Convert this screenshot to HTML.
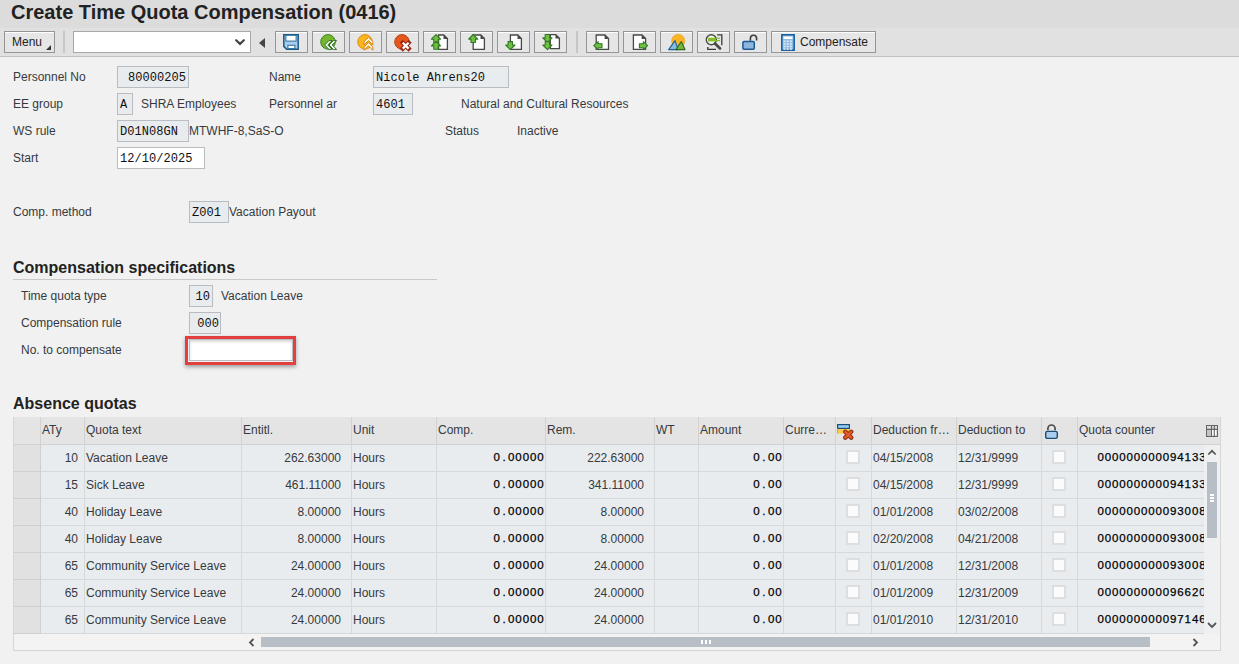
<!DOCTYPE html><html><head><meta charset="utf-8"><style>
*{box-sizing:border-box;margin:0;padding:0}
html,body{width:1239px;height:664px;overflow:hidden;background:#f1f1f1;font-family:"Liberation Sans",sans-serif;font-size:12px;color:#363a3e}
.a{position:absolute;white-space:nowrap}
#title{position:absolute;left:0;top:0;width:1239px;height:28px;background:#dcdcdc}
#title h1{position:absolute;left:11px;top:-0.5px;font-size:20px;font-weight:bold;color:#222;line-height:24px;white-space:nowrap}
#tb{position:absolute;left:0;top:28px;width:1239px;height:29px;background:#e1e1e1;border-bottom:1px solid #c2c2c2}
.btn{position:absolute;top:3px;height:22px;width:33px;border:1px solid #959595;background:#e6e6e6;box-shadow:inset 0 1px 0 #fff}
.btn svg{position:absolute;left:7px;top:2px}
.sep{position:absolute;top:3px;width:2px;height:22px;background:#c6c6c6}
.lbl{position:absolute;white-space:nowrap;line-height:14px}
.fld{position:absolute;height:22px;border:1px solid #b9bdc1;background:#e9ecef;font-family:"Liberation Mono",monospace;font-size:12px;color:#111;line-height:22px;padding:0 2px;white-space:nowrap;letter-spacing:0.06px}
.fld.w{background:#fff}
h2{position:absolute;font-size:16px;font-weight:bold;color:#222;white-space:nowrap;line-height:20px}
#tbl{position:absolute;left:13px;top:417px;width:1208px;height:234px;border:1px solid #d6d6d6;border-top:none;background:#f3f3f3;overflow:hidden}
.hd{position:absolute;top:0;height:28px;background:#e4e4e4;border-right:1px solid #d2d2d2;border-bottom:1px solid #d2d2d2;color:#363a3e;line-height:26px;padding-left:1px;white-space:nowrap;overflow:hidden}
.c{position:absolute;height:27px;background:#e9ecef;border-right:1px solid #d6d9dc;border-bottom:1px solid #d6d9dc;line-height:26px;white-space:nowrap;overflow:hidden;color:#363a3e}
.sel{background:#e1e1e1;border-right:1px solid #cfcfcf;border-bottom:1px solid #cfcfcf}
.r{text-align:right;padding-right:4px}
.m{color:#000;font-size:11.5px;line-height:24px;-webkit-text-stroke:0.25px #000}
.m span{display:inline-block;width:7.28px;text-align:center}
.cb{position:absolute;width:14px;height:14px;background:#fbfbfb;border:2px solid #dcdee0;top:5px}
</style></head><body>
<div id="title"><h1>Create Time Quota Compensation (0416)</h1></div>
<div id="tb">
<div class="btn" style="left:4px;width:51px"><span class="a" style="left:7px;top:3px;color:#222;font-size:12px">Menu</span><svg class="a" style="left:41px;top:13px" width="5" height="5"><path d="M5 0V5H0Z" fill="#333"/></svg></div>
<div class="sep" style="left:63px"></div>
<div class="a" style="left:73px;top:3px;width:178px;height:22px;background:#fff;border:1px solid #a8a8a8"><svg class="a" style="left:161px;top:7px" width="10" height="7"><path d="M1.2 1.2L5 5L8.8 1.2" fill="none" stroke="#444" stroke-width="2.2" stroke-linecap="round"/></svg></div>
<svg class="a" style="left:259px;top:10px" width="6" height="10"><path d="M6 0V10L0 5Z" fill="#444"/></svg>
<div class="btn" style="left:275px"><svg width="16" height="16" viewBox="0 0 16 16" overflow="visible"><path d="M0.8 0.8H15.2V15.2H3.6L0.8 12.4Z" fill="#a6cdee" stroke="#1d5a86" stroke-width="1.5"/><rect x="2.9" y="1.3" width="10.2" height="5.8" fill="#fff" stroke="#2a6d9c" stroke-width="1"/><rect x="4.9" y="11.3" width="7" height="3.3" fill="#fff" stroke="#2a6d9c" stroke-width="1"/></svg></div>
<div class="btn" style="left:312px"><svg width="16" height="16" viewBox="0 0 16 16" overflow="visible"><circle cx="8" cy="7.9" r="7.3" fill="#74b72e" stroke="#3f7f25" stroke-width="1"/><path d="M4.6 11L9 6.6H12.2L7.8 11L12.2 15.4H9Z" fill="#f4fff0" stroke="#2d6a1f" stroke-width="1" stroke-linejoin="miter"/><path d="M9 11L13.4 6.6H16.6L12.2 11L16.6 15.4H13.4Z" fill="#f4fff0" stroke="#2d6a1f" stroke-width="1" stroke-linejoin="miter"/></svg></div>
<div class="btn" style="left:349px"><svg width="16" height="16" viewBox="0 0 16 16" overflow="visible"><circle cx="8" cy="7.9" r="7.3" fill="#f8b61d" stroke="#e49019" stroke-width="1"/><path d="M11.5 3.3L15.9 7.7V10.9L11.5 6.5L7.1 10.9V7.7Z" fill="#fff8e6" stroke="#d9841a" stroke-width="1" stroke-linejoin="miter"/><path d="M11.5 8.6L15.9 13V16.2L11.5 11.8L7.1 16.2V13Z" fill="#fff8e6" stroke="#d9841a" stroke-width="1" stroke-linejoin="miter"/></svg></div>
<div class="btn" style="left:386px"><svg width="16" height="16" viewBox="0 0 16 16" overflow="visible"><circle cx="8" cy="7.9" r="7.3" fill="#e4591b" stroke="#b8401a" stroke-width="1"/><path d="M8.8 8.8L14.6 14.6M14.6 8.8L8.8 14.6" stroke="#9e2a14" stroke-width="4.4" stroke-linecap="square"/><path d="M8.8 8.8L14.6 14.6M14.6 8.8L8.8 14.6" stroke="#fff" stroke-width="2.2"/></svg></div>
<div class="btn" style="left:423px"><svg width="16" height="16" viewBox="0 0 16 16" overflow="visible"><path d="M7.6 1H12.8L16.4 4.6V15.4H7.6Z" fill="#fff" stroke="#484848" stroke-width="1.3" stroke-linejoin="miter"/><path d="M12.5 0.7L16.7 4.9H12.5Z" fill="#484848"/><path d="M5 0.6L9.6 5.2H7.2V8.6H2.8V5.2H0.4Z" fill="#72bf45" stroke="#2f7a22" stroke-width="1.1" stroke-linejoin="round"/><path d="M5 7.3L9.6 11.9H7.2V15.3H2.8V11.9H0.4Z" fill="#72bf45" stroke="#2f7a22" stroke-width="1.1" stroke-linejoin="round"/></svg></div>
<div class="btn" style="left:460px"><svg width="16" height="16" viewBox="0 0 16 16" overflow="visible"><path d="M5.2 1H12.8L16.4 4.6V15.4H5.2Z" fill="#fff" stroke="#484848" stroke-width="1.3" stroke-linejoin="miter"/><path d="M12.5 0.7L16.7 4.9H12.5Z" fill="#484848"/><path d="M5.2 0.5L9.8 5.1H7.4V8.5H3V5.1H0.6Z" fill="#72bf45" stroke="#2f7a22" stroke-width="1.1" stroke-linejoin="round"/></svg></div>
<div class="btn" style="left:497px"><svg width="16" height="16" viewBox="0 0 16 16" overflow="visible"><path d="M5.4 1H12.8L16.4 4.6V15.4H5.4Z" fill="#fff" stroke="#484848" stroke-width="1.3" stroke-linejoin="miter"/><path d="M12.5 0.7L16.7 4.9H12.5Z" fill="#484848"/><path d="M5.3 15.6L9.9 11H7.5V7.6H3.1V11H0.7Z" fill="#72bf45" stroke="#2f7a22" stroke-width="1.1" stroke-linejoin="round"/></svg></div>
<div class="btn" style="left:534px"><svg width="16" height="16" viewBox="0 0 16 16" overflow="visible"><path d="M8.3 0.7H13.8L17.4 4.3V14.6H8.3Z" fill="#fff" stroke="#484848" stroke-width="1.3" stroke-linejoin="miter"/><path d="M13.5 0.4L17.7 4.6H13.5Z" fill="#484848"/><path d="M5.4 8.5L10 3.9H7.6V0.5H3.2V3.9H0.8Z" fill="#72bf45" stroke="#2f7a22" stroke-width="1.1" stroke-linejoin="round"/><path d="M5.4 15.6L10 11H7.6V7.6H3.2V11H0.8Z" fill="#72bf45" stroke="#2f7a22" stroke-width="1.1" stroke-linejoin="round"/></svg></div>
<div class="btn" style="left:586px"><svg width="16" height="16" viewBox="0 0 16 16" overflow="visible"><path d="M2.2 1H10.9L14.5 4.6V15.4H2.2Z" fill="#fff" stroke="#484848" stroke-width="1.3" stroke-linejoin="miter"/><path d="M10.6 0.7L14.8 4.9H10.6Z" fill="#484848"/><path d="M-0.2 11.7L4.1 7.7V9.7H8V13.7H4.1V15.7Z" fill="#72bf45" stroke="#2f7a22" stroke-width="1.1" stroke-linejoin="round"/></svg></div>
<div class="btn" style="left:623px"><svg width="16" height="16" viewBox="0 0 16 16" overflow="visible"><path d="M2.4 1H11L14.6 4.6V15.4H2.4Z" fill="#fff" stroke="#484848" stroke-width="1.3" stroke-linejoin="miter"/><path d="M10.7 0.7L14.9 4.9H10.7Z" fill="#484848"/><path d="M16.6 11.7L12.3 7.7V9.7H8.4V13.7H12.3V15.7Z" fill="#72bf45" stroke="#2f7a22" stroke-width="1.1" stroke-linejoin="round"/></svg></div>
<div class="btn" style="left:660px"><svg width="16" height="16" viewBox="0 0 16 16" overflow="visible"><circle cx="10.2" cy="6.9" r="6.6" fill="#f8b424" stroke="#ec9f22" stroke-width="0.6"/><path d="M0.6 15.6L7 6.6L10.2 15.6Z" fill="#86bde6" stroke="#1e5f8d" stroke-width="1.1" stroke-linejoin="round"/><path d="M7.9 15.6L13.3 7.5L17 15.6Z" fill="#72b83c" stroke="#2c6a1e" stroke-width="1.1" stroke-linejoin="round"/></svg></div>
<div class="btn" style="left:697px"><svg width="16" height="16" viewBox="0 0 16 16" overflow="visible"><path d="M12.2 0.9H16.8V11.2M2.8 13V15.4H11" fill="none" stroke="#3a3a3a" stroke-width="1.3"/><circle cx="6.3" cy="5.8" r="5" fill="#eef8e0" stroke="#4a4a4a" stroke-width="1.4"/><rect x="3" y="3.8" width="7" height="3.6" fill="#86bd2c"/><rect x="10.5" y="3.6" width="4.5" height="1.2" fill="#86bd2c"/><rect x="10.5" y="6" width="4.5" height="1.2" fill="#86bd2c"/><path d="M10 9.6L15 14.6" stroke="#4a4a4a" stroke-width="2.8" stroke-linecap="round"/></svg></div>
<div class="btn" style="left:734px"><svg width="16" height="16" viewBox="0 0 16 16" overflow="visible"><path d="M8.4 6.8V4.4A3.1 3.1 0 0 1 14.6 4.4V6.6" fill="none" stroke="#3f3f3f" stroke-width="1.6"/><rect x="0.9" y="7.6" width="11.4" height="7.6" rx="1.2" fill="#8db7df" stroke="#1c5a93" stroke-width="1.5"/></svg></div>
<div class="sep" style="left:576px"></div>
<div class="btn" style="left:771px;width:105px"><svg class="a" style="left:9px;top:2px" width="14" height="17" viewBox="0 0 14 17"><rect x="0.8" y="0.8" width="12.4" height="15.4" fill="#8fbbe3" stroke="#1d63a0" stroke-width="1.6"/><rect x="2.5" y="2.5" width="9" height="2.5" fill="#fff"/><rect x="2.5" y="6.5" width="2" height="1.6" fill="#dbeaf7"/><rect x="2.5" y="9.1" width="2" height="1.6" fill="#dbeaf7"/><rect x="2.5" y="11.7" width="2" height="1.6" fill="#dbeaf7"/><rect x="2.5" y="14.3" width="2" height="1.6" fill="#dbeaf7"/><rect x="5.7" y="6.5" width="2" height="1.6" fill="#dbeaf7"/><rect x="5.7" y="9.1" width="2" height="1.6" fill="#dbeaf7"/><rect x="5.7" y="11.7" width="2" height="1.6" fill="#dbeaf7"/><rect x="5.7" y="14.3" width="2" height="1.6" fill="#dbeaf7"/><rect x="8.9" y="6.5" width="2" height="1.6" fill="#dbeaf7"/><rect x="8.9" y="9.1" width="2" height="1.6" fill="#dbeaf7"/><rect x="8.9" y="11.7" width="2" height="1.6" fill="#dbeaf7"/><rect x="8.9" y="14.3" width="2" height="1.6" fill="#dbeaf7"/></svg><span class="a" style="left:28px;top:3px;color:#222">Compensate</span></div>
</div>

<div class="lbl" style="left:13px;top:70px">Personnel No</div>
<div class="fld" style="left:117px;top:66px;width:72px;text-align:right;padding-right:2px">80000205</div>
<div class="lbl" style="left:269px;top:70px">Name</div>
<div class="fld" style="left:373px;top:66px;width:136px">Nicole Ahrens20</div>
<div class="lbl" style="left:13px;top:97px">EE group</div>
<div class="fld" style="left:117px;top:93px;width:16px;padding:0 2px">A</div>
<div class="lbl" style="left:141px;top:97px">SHRA Employees</div>
<div class="lbl" style="left:269px;top:97px">Personnel ar</div>
<div class="fld" style="left:373px;top:93px;width:40px">4601</div>
<div class="lbl" style="left:461px;top:97px">Natural and Cultural Resources</div>
<div class="lbl" style="left:13px;top:124px">WS rule</div>
<div class="fld" style="left:117px;top:120px;width:72px">D01N08GN</div>
<div class="lbl" style="left:189px;top:124px">MTWHF-8,SaS-O</div>
<div class="lbl" style="left:445px;top:124px">Status</div>
<div class="lbl" style="left:517px;top:124px">Inactive</div>
<div class="lbl" style="left:13px;top:151px">Start</div>
<div class="fld w" style="left:117px;top:147px;width:88px">12/10/2025</div>
<div class="lbl" style="left:13px;top:205px">Comp. method</div>
<div class="fld" style="left:189px;top:201px;width:40px">Z001</div>
<div class="lbl" style="left:229px;top:205px">Vacation Payout</div>
<h2 style="left:13px;top:258px">Compensation specifications</h2>
<div class="a" style="left:13px;top:279px;width:424px;height:1px;background:#c9c9c9"></div>
<div class="lbl" style="left:21px;top:289px">Time quota type</div>
<div class="fld" style="left:189px;top:285px;width:24px;text-align:right;padding-right:2px">10</div>
<div class="lbl" style="left:221px;top:289px">Vacation Leave</div>
<div class="lbl" style="left:21px;top:316px">Compensation rule</div>
<div class="fld" style="left:189px;top:312px;width:32px;text-align:right;padding-right:1px">000</div>
<div class="lbl" style="left:21px;top:343px">No. to compensate</div>
<div class="a" style="left:185px;top:336px;width:111px;height:29px;border:3px solid #e2403f;box-shadow:0 2px 4px rgba(0,0,0,.35)"></div>
<div class="fld w" style="left:189px;top:339px;width:104px;box-shadow:inset 0 2px 3px rgba(0,0,0,.15)"></div>
<h2 style="left:13px;top:394px">Absence quotas</h2>

<div id="tbl">
<div class="a" style="left:0;top:0;width:1190px;height:217px;overflow:hidden">
<div class="hd" style="left:0px;width:27px"></div>
<div class="hd" style="left:27px;width:44px">ATy</div>
<div class="hd" style="left:71px;width:157px">Quota text</div>
<div class="hd" style="left:228px;width:110px">Entitl.</div>
<div class="hd" style="left:338px;width:85px">Unit</div>
<div class="hd" style="left:423px;width:109px">Comp.</div>
<div class="hd" style="left:532px;width:109px">Rem.</div>
<div class="hd" style="left:641px;width:44px">WT</div>
<div class="hd" style="left:685px;width:85px">Amount</div>
<div class="hd" style="left:770px;width:52px">Curre&hellip;</div>
<div class="hd" style="left:822px;width:36px"></div>
<div class="hd" style="left:858px;width:85px">Deduction fr&hellip;</div>
<div class="hd" style="left:943px;width:85px">Deduction to</div>
<div class="hd" style="left:1028px;width:36px"></div>
<div class="hd" style="left:1064px;width:223px">Quota counter</div>
<div class="c sel" style="left:0px;top:28px;width:27px"></div>
<div class="c " style="left:27px;top:28px;width:44px;text-align:right;padding-right:6px">10</div>
<div class="c " style="left:71px;top:28px;width:157px;padding-left:1px">Vacation Leave</div>
<div class="c " style="left:228px;top:28px;width:110px;text-align:right;padding-right:10px">262.63000</div>
<div class="c " style="left:338px;top:28px;width:85px;padding-left:1px">Hours</div>
<div class="c m" style="left:423px;top:28px;width:109px;text-align:right;padding-right:1px"><span>0</span><span>.</span><span>0</span><span>0</span><span>0</span><span>0</span><span>0</span></div>
<div class="c " style="left:532px;top:28px;width:109px;text-align:right;padding-right:10px">222.63000</div>
<div class="c " style="left:641px;top:28px;width:44px;padding-left:1px"></div>
<div class="c m" style="left:685px;top:28px;width:85px;text-align:right;padding-right:1px"><span>0</span><span>.</span><span>0</span><span>0</span></div>
<div class="c " style="left:770px;top:28px;width:52px;padding-left:1px"></div>
<div class="c " style="left:822px;top:28px;width:36px;padding-left:0px"><div class="cb" style="left:10px"></div></div>
<div class="c " style="left:858px;top:28px;width:85px;padding-left:1px">04/15/2008</div>
<div class="c " style="left:943px;top:28px;width:85px;padding-left:1px">12/31/9999</div>
<div class="c " style="left:1028px;top:28px;width:36px;padding-left:0px"><div class="cb" style="left:10px"></div></div>
<div class="c m" style="left:1064px;top:28px;width:223px;padding-left:19px"><span>0</span><span>0</span><span>0</span><span>0</span><span>0</span><span>0</span><span>0</span><span>0</span><span>0</span><span>0</span><span>9</span><span>4</span><span>1</span><span>3</span><span>3</span></div>
<div class="c sel" style="left:0px;top:55px;width:27px"></div>
<div class="c " style="left:27px;top:55px;width:44px;text-align:right;padding-right:6px">15</div>
<div class="c " style="left:71px;top:55px;width:157px;padding-left:1px">Sick Leave</div>
<div class="c " style="left:228px;top:55px;width:110px;text-align:right;padding-right:10px">461.11000</div>
<div class="c " style="left:338px;top:55px;width:85px;padding-left:1px">Hours</div>
<div class="c m" style="left:423px;top:55px;width:109px;text-align:right;padding-right:1px"><span>0</span><span>.</span><span>0</span><span>0</span><span>0</span><span>0</span><span>0</span></div>
<div class="c " style="left:532px;top:55px;width:109px;text-align:right;padding-right:10px">341.11000</div>
<div class="c " style="left:641px;top:55px;width:44px;padding-left:1px"></div>
<div class="c m" style="left:685px;top:55px;width:85px;text-align:right;padding-right:1px"><span>0</span><span>.</span><span>0</span><span>0</span></div>
<div class="c " style="left:770px;top:55px;width:52px;padding-left:1px"></div>
<div class="c " style="left:822px;top:55px;width:36px;padding-left:0px"><div class="cb" style="left:10px"></div></div>
<div class="c " style="left:858px;top:55px;width:85px;padding-left:1px">04/15/2008</div>
<div class="c " style="left:943px;top:55px;width:85px;padding-left:1px">12/31/9999</div>
<div class="c " style="left:1028px;top:55px;width:36px;padding-left:0px"><div class="cb" style="left:10px"></div></div>
<div class="c m" style="left:1064px;top:55px;width:223px;padding-left:19px"><span>0</span><span>0</span><span>0</span><span>0</span><span>0</span><span>0</span><span>0</span><span>0</span><span>0</span><span>0</span><span>9</span><span>4</span><span>1</span><span>3</span><span>3</span></div>
<div class="c sel" style="left:0px;top:82px;width:27px"></div>
<div class="c " style="left:27px;top:82px;width:44px;text-align:right;padding-right:6px">40</div>
<div class="c " style="left:71px;top:82px;width:157px;padding-left:1px">Holiday Leave</div>
<div class="c " style="left:228px;top:82px;width:110px;text-align:right;padding-right:10px">8.00000</div>
<div class="c " style="left:338px;top:82px;width:85px;padding-left:1px">Hours</div>
<div class="c m" style="left:423px;top:82px;width:109px;text-align:right;padding-right:1px"><span>0</span><span>.</span><span>0</span><span>0</span><span>0</span><span>0</span><span>0</span></div>
<div class="c " style="left:532px;top:82px;width:109px;text-align:right;padding-right:10px">8.00000</div>
<div class="c " style="left:641px;top:82px;width:44px;padding-left:1px"></div>
<div class="c m" style="left:685px;top:82px;width:85px;text-align:right;padding-right:1px"><span>0</span><span>.</span><span>0</span><span>0</span></div>
<div class="c " style="left:770px;top:82px;width:52px;padding-left:1px"></div>
<div class="c " style="left:822px;top:82px;width:36px;padding-left:0px"><div class="cb" style="left:10px"></div></div>
<div class="c " style="left:858px;top:82px;width:85px;padding-left:1px">01/01/2008</div>
<div class="c " style="left:943px;top:82px;width:85px;padding-left:1px">03/02/2008</div>
<div class="c " style="left:1028px;top:82px;width:36px;padding-left:0px"><div class="cb" style="left:10px"></div></div>
<div class="c m" style="left:1064px;top:82px;width:223px;padding-left:19px"><span>0</span><span>0</span><span>0</span><span>0</span><span>0</span><span>0</span><span>0</span><span>0</span><span>0</span><span>0</span><span>9</span><span>3</span><span>0</span><span>0</span><span>8</span></div>
<div class="c sel" style="left:0px;top:109px;width:27px"></div>
<div class="c " style="left:27px;top:109px;width:44px;text-align:right;padding-right:6px">40</div>
<div class="c " style="left:71px;top:109px;width:157px;padding-left:1px">Holiday Leave</div>
<div class="c " style="left:228px;top:109px;width:110px;text-align:right;padding-right:10px">8.00000</div>
<div class="c " style="left:338px;top:109px;width:85px;padding-left:1px">Hours</div>
<div class="c m" style="left:423px;top:109px;width:109px;text-align:right;padding-right:1px"><span>0</span><span>.</span><span>0</span><span>0</span><span>0</span><span>0</span><span>0</span></div>
<div class="c " style="left:532px;top:109px;width:109px;text-align:right;padding-right:10px">8.00000</div>
<div class="c " style="left:641px;top:109px;width:44px;padding-left:1px"></div>
<div class="c m" style="left:685px;top:109px;width:85px;text-align:right;padding-right:1px"><span>0</span><span>.</span><span>0</span><span>0</span></div>
<div class="c " style="left:770px;top:109px;width:52px;padding-left:1px"></div>
<div class="c " style="left:822px;top:109px;width:36px;padding-left:0px"><div class="cb" style="left:10px"></div></div>
<div class="c " style="left:858px;top:109px;width:85px;padding-left:1px">02/20/2008</div>
<div class="c " style="left:943px;top:109px;width:85px;padding-left:1px">04/21/2008</div>
<div class="c " style="left:1028px;top:109px;width:36px;padding-left:0px"><div class="cb" style="left:10px"></div></div>
<div class="c m" style="left:1064px;top:109px;width:223px;padding-left:19px"><span>0</span><span>0</span><span>0</span><span>0</span><span>0</span><span>0</span><span>0</span><span>0</span><span>0</span><span>0</span><span>9</span><span>3</span><span>0</span><span>0</span><span>8</span></div>
<div class="c sel" style="left:0px;top:136px;width:27px"></div>
<div class="c " style="left:27px;top:136px;width:44px;text-align:right;padding-right:6px">65</div>
<div class="c " style="left:71px;top:136px;width:157px;padding-left:1px">Community Service Leave</div>
<div class="c " style="left:228px;top:136px;width:110px;text-align:right;padding-right:10px">24.00000</div>
<div class="c " style="left:338px;top:136px;width:85px;padding-left:1px">Hours</div>
<div class="c m" style="left:423px;top:136px;width:109px;text-align:right;padding-right:1px"><span>0</span><span>.</span><span>0</span><span>0</span><span>0</span><span>0</span><span>0</span></div>
<div class="c " style="left:532px;top:136px;width:109px;text-align:right;padding-right:10px">24.00000</div>
<div class="c " style="left:641px;top:136px;width:44px;padding-left:1px"></div>
<div class="c m" style="left:685px;top:136px;width:85px;text-align:right;padding-right:1px"><span>0</span><span>.</span><span>0</span><span>0</span></div>
<div class="c " style="left:770px;top:136px;width:52px;padding-left:1px"></div>
<div class="c " style="left:822px;top:136px;width:36px;padding-left:0px"><div class="cb" style="left:10px"></div></div>
<div class="c " style="left:858px;top:136px;width:85px;padding-left:1px">01/01/2008</div>
<div class="c " style="left:943px;top:136px;width:85px;padding-left:1px">12/31/2008</div>
<div class="c " style="left:1028px;top:136px;width:36px;padding-left:0px"><div class="cb" style="left:10px"></div></div>
<div class="c m" style="left:1064px;top:136px;width:223px;padding-left:19px"><span>0</span><span>0</span><span>0</span><span>0</span><span>0</span><span>0</span><span>0</span><span>0</span><span>0</span><span>0</span><span>9</span><span>3</span><span>0</span><span>0</span><span>8</span></div>
<div class="c sel" style="left:0px;top:163px;width:27px"></div>
<div class="c " style="left:27px;top:163px;width:44px;text-align:right;padding-right:6px">65</div>
<div class="c " style="left:71px;top:163px;width:157px;padding-left:1px">Community Service Leave</div>
<div class="c " style="left:228px;top:163px;width:110px;text-align:right;padding-right:10px">24.00000</div>
<div class="c " style="left:338px;top:163px;width:85px;padding-left:1px">Hours</div>
<div class="c m" style="left:423px;top:163px;width:109px;text-align:right;padding-right:1px"><span>0</span><span>.</span><span>0</span><span>0</span><span>0</span><span>0</span><span>0</span></div>
<div class="c " style="left:532px;top:163px;width:109px;text-align:right;padding-right:10px">24.00000</div>
<div class="c " style="left:641px;top:163px;width:44px;padding-left:1px"></div>
<div class="c m" style="left:685px;top:163px;width:85px;text-align:right;padding-right:1px"><span>0</span><span>.</span><span>0</span><span>0</span></div>
<div class="c " style="left:770px;top:163px;width:52px;padding-left:1px"></div>
<div class="c " style="left:822px;top:163px;width:36px;padding-left:0px"><div class="cb" style="left:10px"></div></div>
<div class="c " style="left:858px;top:163px;width:85px;padding-left:1px">01/01/2009</div>
<div class="c " style="left:943px;top:163px;width:85px;padding-left:1px">12/31/2009</div>
<div class="c " style="left:1028px;top:163px;width:36px;padding-left:0px"><div class="cb" style="left:10px"></div></div>
<div class="c m" style="left:1064px;top:163px;width:223px;padding-left:19px"><span>0</span><span>0</span><span>0</span><span>0</span><span>0</span><span>0</span><span>0</span><span>0</span><span>0</span><span>0</span><span>9</span><span>6</span><span>6</span><span>2</span><span>0</span></div>
<div class="c sel" style="left:0px;top:190px;width:27px"></div>
<div class="c " style="left:27px;top:190px;width:44px;text-align:right;padding-right:6px">65</div>
<div class="c " style="left:71px;top:190px;width:157px;padding-left:1px">Community Service Leave</div>
<div class="c " style="left:228px;top:190px;width:110px;text-align:right;padding-right:10px">24.00000</div>
<div class="c " style="left:338px;top:190px;width:85px;padding-left:1px">Hours</div>
<div class="c m" style="left:423px;top:190px;width:109px;text-align:right;padding-right:1px"><span>0</span><span>.</span><span>0</span><span>0</span><span>0</span><span>0</span><span>0</span></div>
<div class="c " style="left:532px;top:190px;width:109px;text-align:right;padding-right:10px">24.00000</div>
<div class="c " style="left:641px;top:190px;width:44px;padding-left:1px"></div>
<div class="c m" style="left:685px;top:190px;width:85px;text-align:right;padding-right:1px"><span>0</span><span>.</span><span>0</span><span>0</span></div>
<div class="c " style="left:770px;top:190px;width:52px;padding-left:1px"></div>
<div class="c " style="left:822px;top:190px;width:36px;padding-left:0px"><div class="cb" style="left:10px"></div></div>
<div class="c " style="left:858px;top:190px;width:85px;padding-left:1px">01/01/2010</div>
<div class="c " style="left:943px;top:190px;width:85px;padding-left:1px">12/31/2010</div>
<div class="c " style="left:1028px;top:190px;width:36px;padding-left:0px"><div class="cb" style="left:10px"></div></div>
<div class="c m" style="left:1064px;top:190px;width:223px;padding-left:19px"><span>0</span><span>0</span><span>0</span><span>0</span><span>0</span><span>0</span><span>0</span><span>0</span><span>0</span><span>0</span><span>9</span><span>7</span><span>1</span><span>4</span><span>6</span></div>
</div>
<div class="a" style="left:1190px;top:28px;width:17px;height:189px;background:#eef0f2"></div>
<svg class="a" style="left:1193px;top:32px" width="10" height="7"><path d="M1.3 5.5L5 1.8L8.7 5.5" fill="none" stroke="#555" stroke-width="1.7"/></svg>
<div class="a" style="left:1193px;top:45px;width:10px;height:76px;background:#b7bec6"></div>
<div class="a" style="left:1196px;top:77px;width:4px;height:2px;background:#fff"></div><div class="a" style="left:1196px;top:80px;width:4px;height:2px;background:#fff"></div><div class="a" style="left:1196px;top:83px;width:4px;height:2px;background:#fff"></div>
<svg class="a" style="left:1193px;top:205px" width="10" height="7"><path d="M1 1L5 5L9 1" fill="none" stroke="#555" stroke-width="1.8"/></svg>
<div class="a" style="left:1190px;top:0;width:17px;height:28px;background:#e4e4e4;border-bottom:1px solid #d2d2d2"></div>
<svg class="a" style="left:1192px;top:8px" width="12" height="12" viewBox="0 0 12 12"><rect x="0.6" y="0.6" width="10.8" height="10.8" fill="#fff" stroke="#666" stroke-width="1.2"/><rect x="1" y="1" width="10" height="3.2" fill="#dcdcdc"/><rect x="1" y="4.6" width="4.2" height="6.4" fill="#c4c4c4"/><path d="M0.6 4.4H11.4M5.5 0.6V11.4M8.3 0.6V11.4" stroke="#666" stroke-width="1.1"/></svg>
<svg class="a" style="left:823px;top:7px" width="17" height="16" viewBox="0 0 17 16"><rect x="0.6" y="4.4" width="11.8" height="5.2" fill="#f8cc48"/><rect x="0.6" y="0.6" width="11.8" height="3.8" fill="#93cdf5" stroke="#1b4f7a" stroke-width="1.2"/><path d="M0.6 4.4V9.6" stroke="#d9a52a" stroke-width="1"/><path d="M8.3 7.8L14.2 13.6M14.2 7.8L8.3 13.6" stroke="#8a2a12" stroke-width="4.4" stroke-linecap="round"/><path d="M8.3 7.8L14.2 13.6M14.2 7.8L8.3 13.6" stroke="#e45a28" stroke-width="2.4" stroke-linecap="round"/></svg>
<svg class="a" style="left:1031px;top:7px" width="14" height="16" viewBox="0 0 14 16"><path d="M2.9 6.2V4.6A3.6 3.6 0 0 1 10.1 4.6V6.2" fill="none" stroke="#4a4a4a" stroke-width="1.7"/><rect x="0.7" y="7.4" width="11.6" height="7" rx="1.6" fill="#a8cdee" stroke="#1a4d75" stroke-width="1.4"/></svg>
<svg class="a" style="left:234px;top:221px" width="7" height="9"><path d="M5.5 1L2 4.5L5.5 8" fill="none" stroke="#555" stroke-width="1.8"/></svg>
<div class="a" style="left:247px;top:220px;width:889px;height:10px;background:#b7bec6"></div>
<div class="a" style="left:687px;top:223px;width:2px;height:4px;background:#fff"></div><div class="a" style="left:691px;top:223px;width:2px;height:4px;background:#fff"></div><div class="a" style="left:695px;top:223px;width:2px;height:4px;background:#fff"></div>
<svg class="a" style="left:1178px;top:221px" width="7" height="9"><path d="M1.5 1L5 4.5L1.5 8" fill="none" stroke="#555" stroke-width="1.8"/></svg>
</div>
</body></html>
